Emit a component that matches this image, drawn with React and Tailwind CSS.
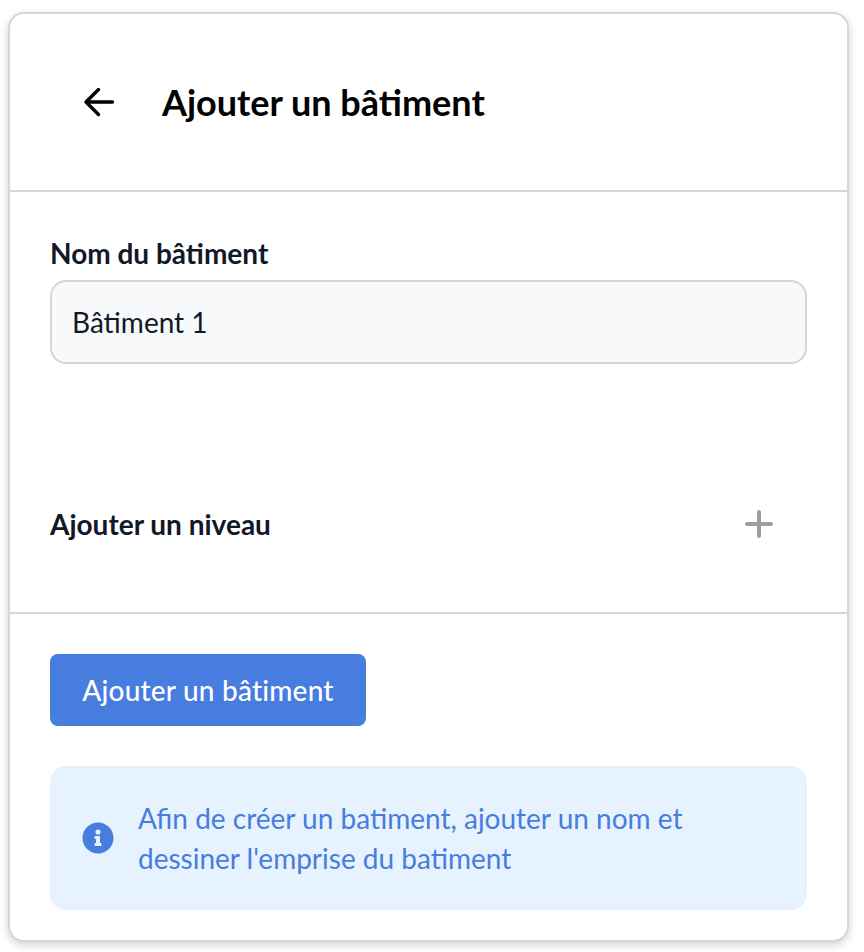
import React from "react";
import { FaInfoCircle } from "react-icons/fa";

export default function App() {
  return (
    <div className="w-[864px] h-[952px] bg-white pt-[12px] pl-[8px] font-['Lato',sans-serif]">
      <div className="w-[841px] h-[930px] flex flex-col rounded-[16px] border-2 border-[#d3d6dc] bg-white shadow-[0_3px_8px_rgba(0,0,0,0.18)]">
        <div className="h-[178px] flex items-center pl-[69px] gap-[47px] border-b-2 border-[#d3d6dc] shrink-0">
          <svg width="36" height="36" viewBox="0 0 36 36" fill="none" stroke="#000" strokeWidth="3.4" strokeLinecap="round" strokeLinejoin="round">
            <path d="M33.5 18H7M19.5 5.5L7 18l12.5 12.5" />
          </svg>
          <h1 className="text-[36px] font-bold text-black leading-none">Ajouter un bâtiment</h1>
        </div>
        <div className="px-[40px] pt-[44px] h-[422px] shrink-0 border-b-2 border-[#d3d6dc]">
          <label className="block text-[28px] font-bold leading-[34px] text-[#111827]">Nom du bâtiment</label>
          <div className="mt-[10px] h-[84px] rounded-[16px] border-2 border-[#d3d6dc] bg-[#f8f9fb] flex items-center px-[20px] text-[28px] text-[#111827]">Bâtiment 1</div>
          <div className="mt-[143px] flex items-center justify-between pr-[33px]">
            <span className="text-[28px] font-bold text-[#111827] leading-[34px]">Ajouter un niveau</span>
            <svg width="30" height="30" viewBox="0 0 30 30" stroke="#9e9e9e" strokeWidth="4" strokeLinecap="round">
              <path d="M15 3v24M3 15h24" />
            </svg>
          </div>
        </div>
        <div className="px-[40px] pt-[40px]">
          <button className="block h-[72px] w-[316px] rounded-[8px] bg-[#467ddf] text-white text-[28px] tracking-[0.2px] font-medium">Ajouter un bâtiment</button>
          <div className="mt-[40px] h-[144px] rounded-[16px] bg-[#e6f2fe] flex items-center pl-[32px] pr-[40px] gap-[24px]">
            <FaInfoCircle className="shrink-0 w-[32px] h-[32px] text-[#467ddf]" />
            <p className="text-[28px] leading-[40px] text-[#467ddf]">Afin de créer un batiment, ajouter un nom et dessiner l'emprise du batiment</p>
          </div>
        </div>
      </div>
    </div>
  );
}
